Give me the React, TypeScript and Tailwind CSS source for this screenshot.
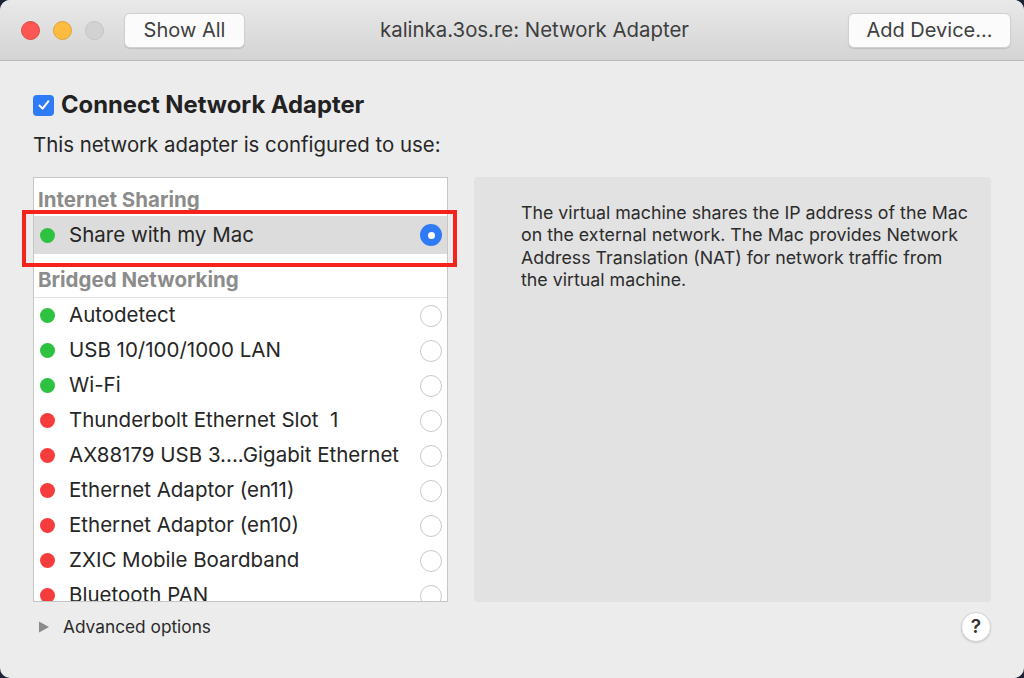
import React from "react";

type Item = { name: string; on: boolean };

const bridged: Item[] = [
  { name: "Autodetect", on: true },
  { name: "USB 10/100/1000 LAN", on: true },
  { name: "Wi-Fi", on: true },
  { name: "Thunderbolt Ethernet Slot  1", on: false },
  { name: "AX88179 USB 3....Gigabit Ethernet", on: false },
  { name: "Ethernet Adaptor (en11)", on: false },
  { name: "Ethernet Adaptor (en10)", on: false },
  { name: "ZXIC Mobile Boardband", on: false },
  { name: "Bluetooth PAN", on: false },
];

function Dot({ on }: { on: boolean }) {
  return (
    <span
      className={`w-[15px] h-[15px] rounded-full shrink-0 ${on ? "bg-[#2dc23f]" : "bg-[#f63d3d]"}`}
    />
  );
}

function Radio({ checked }: { checked?: boolean }) {
  if (checked) {
    return (
      <span className="w-[22px] h-[22px] rounded-full bg-[#2f7bf5] flex items-center justify-center shrink-0">
        <span className="w-[7px] h-[7px] rounded-full bg-white" />
      </span>
    );
  }
  return <span className="w-[22px] h-[22px] rounded-full border border-[#c9c9c9] bg-white shrink-0" />;
}

function Row({ item, selected }: { item: Item; selected?: boolean }) {
  return (
    <div
      className={`flex items-center pl-[6px] pr-[5px] ${selected ? "h-[38px] bg-[#dcdcdc]" : "h-[35px]"}`}
    >
      <Dot on={item.on} />
      <span className="ml-[14px] flex-1 text-[20.5px] text-[#262626] whitespace-pre">{item.name}</span>
      <Radio checked={selected} />
    </div>
  );
}

export default function App() {
  return (
    <div className="w-[1024px] h-[678px] bg-[#1c2336] overflow-hidden" style={{ fontFamily: "Inter, 'Noto Sans', sans-serif" }}>
      <div className="w-full h-full bg-[#ececec] rounded-[10px] overflow-hidden flex flex-col">
        {/* Title bar */}
        <div className="h-[61px] shrink-0 flex items-center bg-gradient-to-b from-[#e9e9e9] to-[#d4d4d4] border-b border-[#b8b8b8]">
          <div className="flex items-center gap-[13px] ml-[21px]">
            <span className="w-[19px] h-[19px] rounded-full bg-[#fc5753] border border-[#e0443e]" />
            <span className="w-[19px] h-[19px] rounded-full bg-[#fdbc40] border border-[#dea236]" />
            <span className="w-[19px] h-[19px] rounded-full bg-[#d2d2d2] border border-[#c4c4c4]" />
          </div>
          <button className="ml-[20px] w-[121px] h-[35px] rounded-[6px] bg-[#fbfbfb] border border-[#d0d0d0] shadow-[0_1px_1px_rgba(0,0,0,0.12)] text-[20px] text-[#404040]">
            Show All
          </button>
          <div className="ml-[135px] text-[20.4px] text-[#3e3e3e] whitespace-nowrap">kalinka.3os.re: Network Adapter</div>
          <button className="ml-auto mr-[13px] w-[163px] h-[35px] rounded-[6px] bg-[#fbfbfb] border border-[#d0d0d0] shadow-[0_1px_1px_rgba(0,0,0,0.12)] text-[20px] text-[#404040]">
            Add Device...
          </button>
        </div>

        {/* Body */}
        <div className="flex-1 flex flex-col px-[33px] pt-[32px]">
          <div className="flex items-center h-[24px]">
            <span className="w-[21px] h-[21px] rounded-[4px] bg-[#2f7bf5] flex items-center justify-center">
              <svg width="14" height="14" viewBox="0 0 14 14" fill="none">
                <path d="M2.5 7.5 L5.6 10.6 L11.5 3.2" stroke="white" strokeWidth="2" strokeLinecap="round" strokeLinejoin="round" />
              </svg>
            </span>
            <span className="ml-[7px] text-[23.8px] font-bold text-[#222]">Connect Network Adapter</span>
          </div>
          <div className="mt-[16px] text-[20.4px] text-[#262626] leading-[24px]">This network adapter is configured to use:</div>

          <div className="mt-[20px] flex gap-[26px]">
            <div className="relative w-[415px] h-[425px] shrink-0">
              <div className="w-full h-full bg-white border border-[#c6c6c6] overflow-hidden">
                <div className="h-[38px] flex items-center pt-[6px] pl-[4px] text-[20.5px] font-bold text-[#8c8c8c]">Internet Sharing</div>
                <Row item={{ name: "Share with my Mac", on: true }} selected />
                <div className="h-[44px] flex items-end pb-[1px] pl-[4px] text-[20.5px] font-bold text-[#8c8c8c] border-b border-[#e2e2e2]">Bridged Networking</div>
                {bridged.map((it) => (
                  <Row key={it.name} item={it} />
                ))}
              </div>
              <div className="absolute left-[-11px] top-[33px] w-[435px] h-[57px] border-[4px] border-[#f5231b] pointer-events-none" />
            </div>

            <div className="flex-1 h-[425px] bg-[#e2e2e2] rounded-[4px] pl-[47px] pr-[20px] pt-[25px]">
              <p className="text-[17.8px] leading-[22.3px] text-[#2c2c2c] max-w-[452px]">
                The virtual machine shares the IP address of the Mac on the external network. The Mac provides Network Address Translation (NAT) for network traffic from the virtual machine.
              </p>
            </div>
          </div>

          <div className="mt-[10px] flex items-center">
            <div className="flex items-center">
              <svg width="12" height="12" viewBox="0 0 12 12" className="ml-[5px]">
                <path d="M1 0.5 L11 6 L1 11.5 Z" fill="#8a8a8a" />
              </svg>
              <span className="ml-[13px] text-[17.3px] text-[#2a2a2a]">Advanced options</span>
            </div>
            <button className="ml-auto w-[30px] h-[30px] rounded-full bg-white border border-[#d4d4d4] shadow-[0_1px_2px_rgba(0,0,0,0.15)] flex items-center justify-center text-[19px] font-semibold text-[#333]">
              ?
            </button>
          </div>
        </div>
      </div>
    </div>
  );
}
